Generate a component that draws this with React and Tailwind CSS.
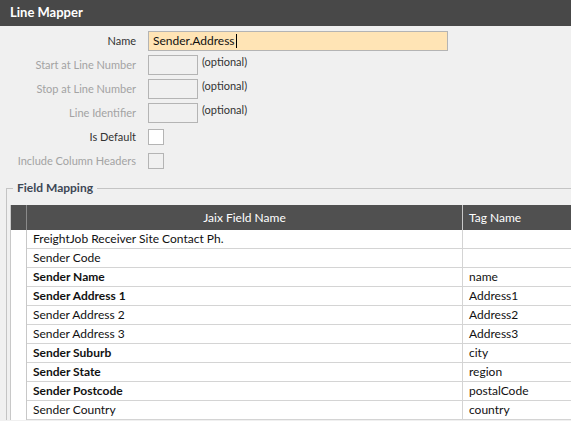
import React from 'react'

const rows = [
  { name: 'FreightJob Receiver Site Contact Ph.', tag: '', bold: false },
  { name: 'Sender Code', tag: '', bold: false },
  { name: 'Sender Name', tag: 'name', bold: true },
  { name: 'Sender Address 1', tag: 'Address1', bold: true },
  { name: 'Sender Address 2', tag: 'Address2', bold: false },
  { name: 'Sender Address 3', tag: 'Address3', bold: false },
  { name: 'Sender Suburb', tag: 'city', bold: true },
  { name: 'Sender State', tag: 'region', bold: true },
  { name: 'Sender Postcode', tag: 'postalCode', bold: true },
  { name: 'Sender Country', tag: 'country', bold: false },
]

function NumberRow({ label }) {
  return (
    <div className="flex h-[20px] gap-[12px]">
      <div className="w-[136px] whitespace-nowrap text-right leading-[20px] text-[#a3a3a3]">{label}</div>
      <div className="h-[20px] w-[50px] border border-[#b4b4b4] bg-[#f0f0f0]" />
      <div className="-ml-[8px] -mt-[3px] whitespace-nowrap leading-[20px] text-[#333]">(optional)</div>
    </div>
  )
}

function CheckRow({ label, enabled }) {
  return (
    <div className="flex h-[20px] items-center gap-[12px]">
      <div className={`w-[136px] whitespace-nowrap text-right leading-[20px] ${enabled ? 'text-[#333]' : 'text-[#a3a3a3]'}`}>{label}</div>
      <div className={`h-[16px] w-[16px] border border-[#b4b4b4] ${enabled ? 'bg-white' : 'bg-[#f0f0f0]'}`} />
    </div>
  )
}

export default function App() {
  return (
    <div className="h-[421px] w-[571px] overflow-hidden bg-[#f0f0f0] text-[12px]" style={{ fontFamily: 'Lato, "Noto Sans", sans-serif' }}>
      <div className="flex h-[26px] items-center bg-[#484848] pl-[10px] text-[13px] font-bold text-white">
        Line Mapper
      </div>

      <div className="flex flex-col gap-[4px] pt-[5px] text-[11px]">
        <div className="flex h-[20px] gap-[12px]">
          <div className="w-[136px] text-right leading-[20px] text-[#333]">Name</div>
          <div className="flex h-[20px] w-[300px] items-center border border-[#b4b4b4] bg-[#ffe4b5] pl-[4px] text-[12px] text-[#111]">
            Sender.Address<span className="ml-px inline-block h-[14px] w-px bg-black" />
          </div>
        </div>
        <NumberRow label="Start at Line Number" />
        <NumberRow label="Stop at Line Number" />
        <NumberRow label="Line Identifier" />
        <CheckRow label="Is Default" enabled />
        <CheckRow label="Include Column Headers" />
      </div>

      <fieldset className="ml-[6px] mt-[8px] border-l border-t border-[#c4c4c4] pl-[3px]">
        <legend className="ml-[3px] px-[4px] leading-[18px] font-bold text-[#3d4755]">Field Mapping</legend>
        <div className="mt-[8px] w-[700px] border-l border-[#c8c8c8]">
          <div className="flex h-[25px] bg-[#505050] text-white">
            <div className="w-[16px] border-r border-[#8a8a8a]" />
            <div className="flex w-[436px] items-center justify-center border-r border-[#c8c8c8]">Jaix Field Name</div>
            <div className="flex flex-1 items-center pl-[6px]">Tag Name</div>
          </div>
          {rows.map(r => (
            <div key={r.name} className="flex h-[19px] bg-white text-[#111]">
              <div className="w-[16px] border-r border-[#c8c8c8] bg-white" />
              <div className={`flex w-[436px] items-center whitespace-nowrap border-b border-r border-[#d4d4d4] pl-[6px] ${r.bold ? 'font-bold' : ''}`}>{r.name}</div>
              <div className="flex flex-1 items-center border-b border-[#d4d4d4] pl-[6px]">{r.tag}</div>
            </div>
          ))}
        </div>
      </fieldset>
    </div>
  )
}
